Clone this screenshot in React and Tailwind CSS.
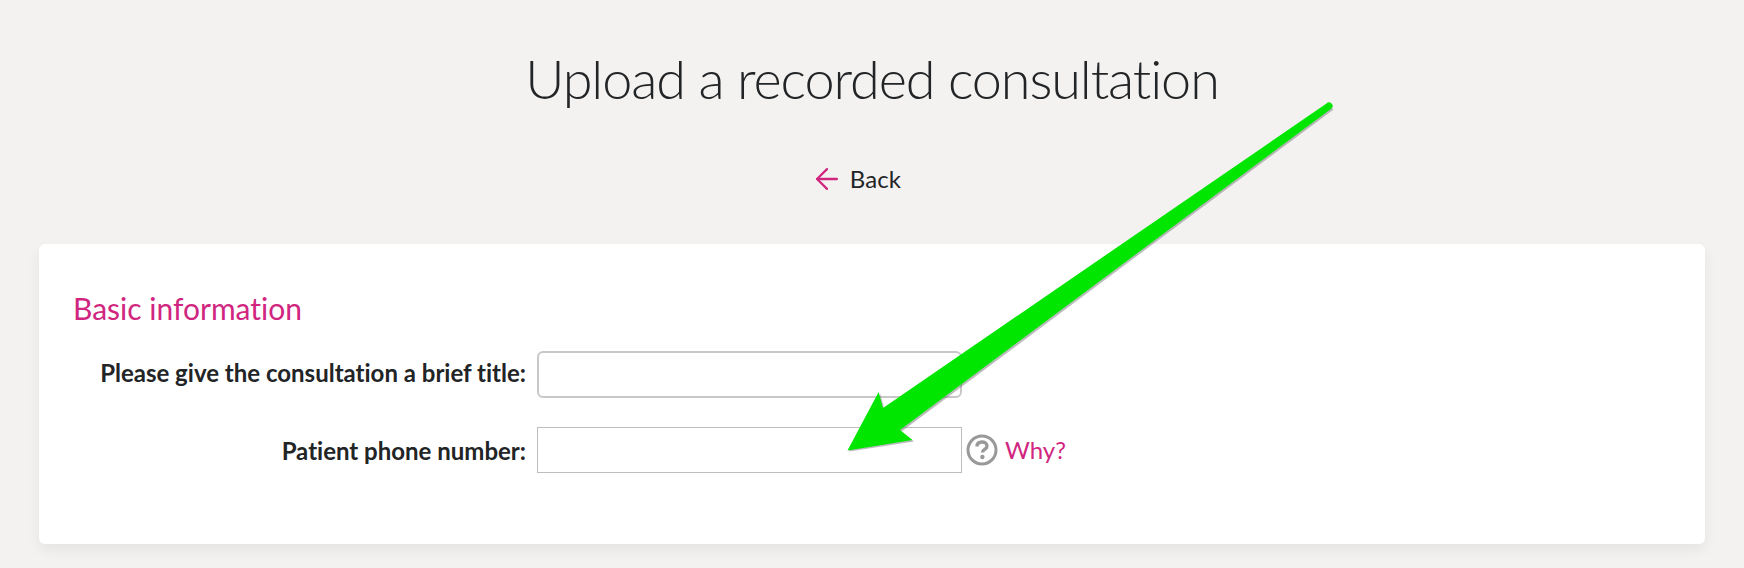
import { ArrowLeft } from 'lucide-react'

function Arrow() {
    return (
        <svg className="absolute left-0 top-0 pointer-events-none" width="1744" height="568" viewBox="0 0 1744 568">
            <polygon points="1332,108 900,430 912.5,440 847.5,450 878.6,392 883,408 1327,104" fill="#777" opacity="0.5" transform="translate(1.5 1.5)" />
            <path d="M1326.5 103.5 L883 408 L878.6 392 L847.5 450.5 L912.5 440 L900 430 L1331.5 108.5 A3.2 3.2 0 0 0 1326.5 103.5 Z" fill="#00e600" />
        </svg>
    )
}

export default function App() {
    return (
        <div className="relative h-[568px] overflow-hidden bg-[#f3f2f1] text-[#222426] font-['Lato',sans-serif] [font-variant-ligatures:none]">
            <h1 className="pt-[45px] text-center text-[54px] leading-[68px] font-light tracking-[-1.1px]">Upload a recorded consultation</h1>
            <div className="mt-[49px] flex items-center justify-center gap-[6px] pr-[33px] h-[34px]">
                <ArrowLeft size={34} strokeWidth={1.6} className="text-[#d1267f]" />
                <span className="text-[24px] tracking-[0.1px]">Back</span>
            </div>
            <div className="mx-[39px] mt-[48px] h-[300px] rounded-[6px] bg-white pl-[34px] pt-[44px] shadow-[0_6px_14px_rgba(0,0,0,0.06)]">
                <h2 className="text-[30px] leading-[40px] text-[#d1267f]">Basic information</h2>
                <div className="mt-[23px] flex flex-col gap-[29px]">
                    <div className="flex items-center">
                        <label className="w-[453px] pb-[3px] text-right text-[24px] font-bold">Please give the consultation a brief title:</label>
                        <input className="ml-[11px] h-[47px] w-[425px] rounded-[6px] border-2 border-[#c8c8c8] bg-white" />
                    </div>
                    <div className="flex items-center">
                        <label className="w-[453px] pt-[2px] text-right text-[24px] font-bold">Patient phone number:</label>
                        <input className="ml-[11px] h-[46px] w-[425px] border border-[#bdbdbd] bg-white" />
                        <svg className="ml-[4px]" width="32" height="32" viewBox="0 0 32 32">
                            <circle cx="16" cy="16" r="14" fill="none" stroke="#999" strokeWidth="3" />
                            <path d="M11 12.5c0-3 2.2-4.5 5-4.5s5 1.6 5 4c0 3.6-4.6 3.2-4.6 6.6" fill="none" stroke="#999" strokeWidth="3.4" />
                            <circle cx="16.4" cy="23" r="2.2" fill="#999" />
                        </svg>
                        <a className="ml-[7px] text-[24px] text-[#d1267f]">Why?</a>
                    </div>
                </div>
            </div>
            <Arrow />
        </div>
    )
}
